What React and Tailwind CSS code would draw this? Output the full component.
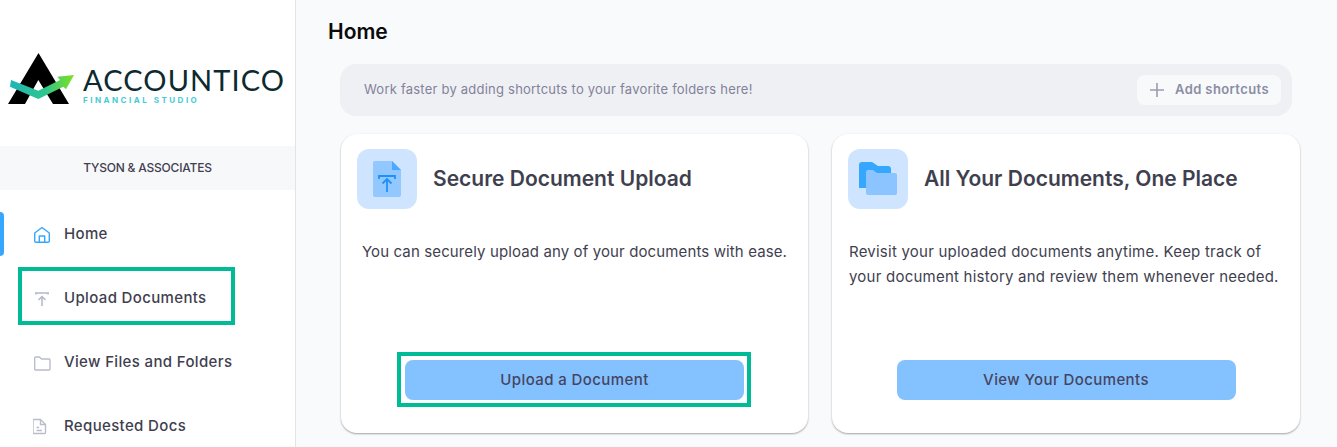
const F = { fontFamily: '"Inter", "Liberation Sans", sans-serif' };

function Logo() {
  return (
    <div className="h-[146px] shrink-0 flex items-end pl-2 pb-[42px]">
      <svg width="68" height="51" viewBox="0 0 68 51" className="shrink-0">
        <defs>
          <linearGradient id="lg" x1="0" x2="1" y1="0" y2="0">
            <stop offset="0" stopColor="#1fb5b5" />
            <stop offset="0.55" stopColor="#2fc58f" />
            <stop offset="1" stopColor="#7fe01f" />
          </linearGradient>
        </defs>
        <path d="M30.5 0 L61 51 L45 51 L30.3 27 L17 51 L0 51 Z" fill="#000" />
        <path d="M3 27 L2 33.7 L30.3 46 L55.3 33.7 L58 36.3 L66 22 L49.3 23.7 L52 27 L30.3 37.7 Z" fill="url(#lg)" />
      </svg>
      <div className="ml-[7px] flex flex-col -mb-[1px]">
        <span className="text-[29px] leading-[30px] tracking-[1.1px] text-[#0d2a30]" style={{ fontFamily: '"Lato", sans-serif' }}>ACCOUNTICO</span>
        <span className="text-[8px] leading-[10px] font-bold tracking-[2.5px] text-[#45cbd6]" style={F}>FINANCIAL STUDIO</span>
      </div>
    </div>
  );
}

function NavRow({ icon, label, active }) {
  return (
    <div className="h-16 flex items-center relative pl-[33px]">
      {active && <span className="absolute left-0 top-[10px] w-1 h-[44px] bg-[#35a7ff] rounded-r-sm" />}
      <span className="w-[18px] h-[18px] flex items-center justify-center shrink-0">{icon}</span>
      <span className="ml-[13px] text-[15px] font-medium text-[#3f3f50] tracking-[0.35px]">{label}</span>
    </div>
  );
}

const HomeIcon = (
  <svg width="18" height="18" viewBox="0 0 18 18" fill="none" stroke="#35a7ff" strokeWidth="1.4" strokeLinejoin="round">
    <path d="M1.7 8 L9 2.5 L16.3 8 V16 Q16.3 17.3 15 17.3 H3 Q1.7 17.3 1.7 16 Z" />
    <path d="M6.3 17.3 V11 H11.7 V17.3" />
  </svg>
);
const UploadIcon = (
  <svg width="18" height="18" viewBox="0 0 18 18" fill="none" stroke="#b4b8c8" strokeWidth="1.5">
    <path d="M2 4 H16 M3 4 V5.5 M15 4 V5.5" />
    <path d="M9 17 V8 M5.5 11 L9 7.5 L12.5 11" />
  </svg>
);
const FolderIcon = (
  <svg width="18" height="18" viewBox="0 0 18 18" fill="none" stroke="#b9bdcb" strokeWidth="1.4" strokeLinejoin="round">
    <path d="M1.7 5 Q1.7 4 2.7 4 H6.5 L8.5 6 H16 Q17 6 17 7 V16 Q17 17 16 17 H2.7 Q1.7 17 1.7 16 Z" />
  </svg>
);
const DocIcon = (
  <svg width="18" height="18" viewBox="0 0 18 18" fill="none" stroke="#b9bdcb" strokeWidth="1.4" strokeLinejoin="round">
    <path d="M0 3.5 Q0 2.5 1 2.5 H7.5 L12.5 7.5 V15.5 Q12.5 16.5 11.5 16.5 H1 Q0 16.5 0 15.5 Z" />
    <path d="M7.5 2.5 V7.5 H12.5 M3.5 10.5 H6 M3.5 13.5 H9" />
  </svg>
);

function Card({ icon, title, children, button, className }) {
  return (
    <div className={"h-[299px] bg-white rounded-2xl shadow-[0_1px_2px_rgba(0,0,0,0.35)] flex flex-col px-4 pt-[15px] pb-[33px] " + className}>
      <div className="flex items-center gap-4">
        <div className="w-[60px] h-[60px] rounded-xl bg-[#cfe5ff] flex items-center justify-center shrink-0">{icon}</div>
        <h2 className="text-[21px] font-semibold text-[#3f3f50]">{title}</h2>
      </div>
      <div className="mt-[30px] text-[15px] leading-[25px] text-[#3f3f50]">{children}</div>
      <button className="mt-auto mx-auto w-[339px] h-10 rounded-lg bg-[#84c1ff] text-[15px] font-medium text-[#45455f] tracking-[0.4px] block">{button}</button>
    </div>
  );
}

export default function App() {
  return (
    <div className="w-[1337px] h-[447px] overflow-hidden flex relative bg-[#f9fafb]" style={F}>
      <aside className="w-[296px] shrink-0 bg-white border-r border-[#e4e4e7] flex flex-col">
        <Logo />
        <div className="h-[44px] shrink-0 bg-[#f7f8fa] flex items-center justify-center text-[12px] font-medium text-[#3f3f50] tracking-[-0.2px]">TYSON &amp; ASSOCIATES</div>
        <nav className="pt-3 shrink-0">
          <NavRow active icon={HomeIcon} label="Home" />
          <NavRow icon={UploadIcon} label="Upload Documents" />
          <NavRow icon={FolderIcon} label="View Files and Folders" />
          <NavRow icon={DocIcon} label="Requested Docs" />
        </nav>
      </aside>
      <main className="flex-1 min-w-0">
        <h1 className="ml-[32px] mt-[18px] text-[21px] leading-7 font-semibold text-[#0a0a0a]">Home</h1>
        <div className="ml-[44px] mt-[18px] w-[952px] h-[52px] rounded-2xl bg-[#eff0f4] flex items-center justify-between pl-6 pr-[11px]">
          <span className="text-[13px] text-[#82829a] tracking-[0.22px]">Work faster by adding shortcuts to your favorite folders here!</span>
          <button className="w-[144px] h-[30px] rounded-lg bg-[#f8f9fb] flex items-center pl-[13px] text-[#8a8da3]">
            <svg width="14" height="14" viewBox="0 0 14 14" stroke="#9a9db0" strokeWidth="1.6"><path d="M7 0 V14 M0 7 H14" /></svg>
            <span className="ml-[11px] text-[13px] font-semibold tracking-[0.4px]">Add shortcuts</span>
          </button>
        </div>
        <div className="ml-[45px] mt-[18px] flex gap-6">
          <Card
            className="w-[467px]"
            title="Secure Document Upload"
            button="Upload a Document"
            icon={
              <svg width="30" height="36" viewBox="0 0 30 36">
                <path d="M3 0 H20 L29 9 V34 Q29 36 27 36 H3 Q1 36 1 34 V2 Q1 0 3 0 Z" fill="#93c7ff" />
                <path d="M20 0 L29 9 H20 Z" fill="#4aa8ff" />
                <path d="M7 18 V15 H23 V18" fill="none" stroke="#1e90ff" strokeWidth="1.8" />
                <path d="M15 31 V18 M10.5 22.5 L15 18 L19.5 22.5" fill="none" stroke="#1e90ff" strokeWidth="1.8" />
              </svg>
            }
          >
            <p className="text-center tracking-[0.12px]">You can securely upload any of your documents with ease.</p>
          </Card>
          <Card
            className="w-[468px]"
            title="All Your Documents, One Place"
            button="View Your Documents"
            icon={
              <svg width="38" height="34" viewBox="0 0 38 34">
                <path d="M0 3 Q0 0 3 0 H13 L19 4 H29 Q32 4 32 7 V26 H0 Z" fill="#35a7ff" />
                <path d="M7 10 Q7 8 9 8 H14 L18 11 H36 Q38 11 38 13 V31 Q38 33 36 33 H9 Q7 33 7 31 Z" fill="#8cc4ff" />
              </svg>
            }
          >
            <p className="pl-px tracking-[0.23px]">Revisit your uploaded documents anytime. Keep track of your document history and review them whenever needed.</p>
          </Card>
        </div>
      </main>
      <div className="absolute left-[18px] top-[267px] w-[217px] h-[58px] border-4 border-[#00bc96] pointer-events-none" />
      <div className="absolute left-[397px] top-[352px] w-[354px] h-[55px] border-4 border-[#00bc96] pointer-events-none" />
    </div>
  );
}
